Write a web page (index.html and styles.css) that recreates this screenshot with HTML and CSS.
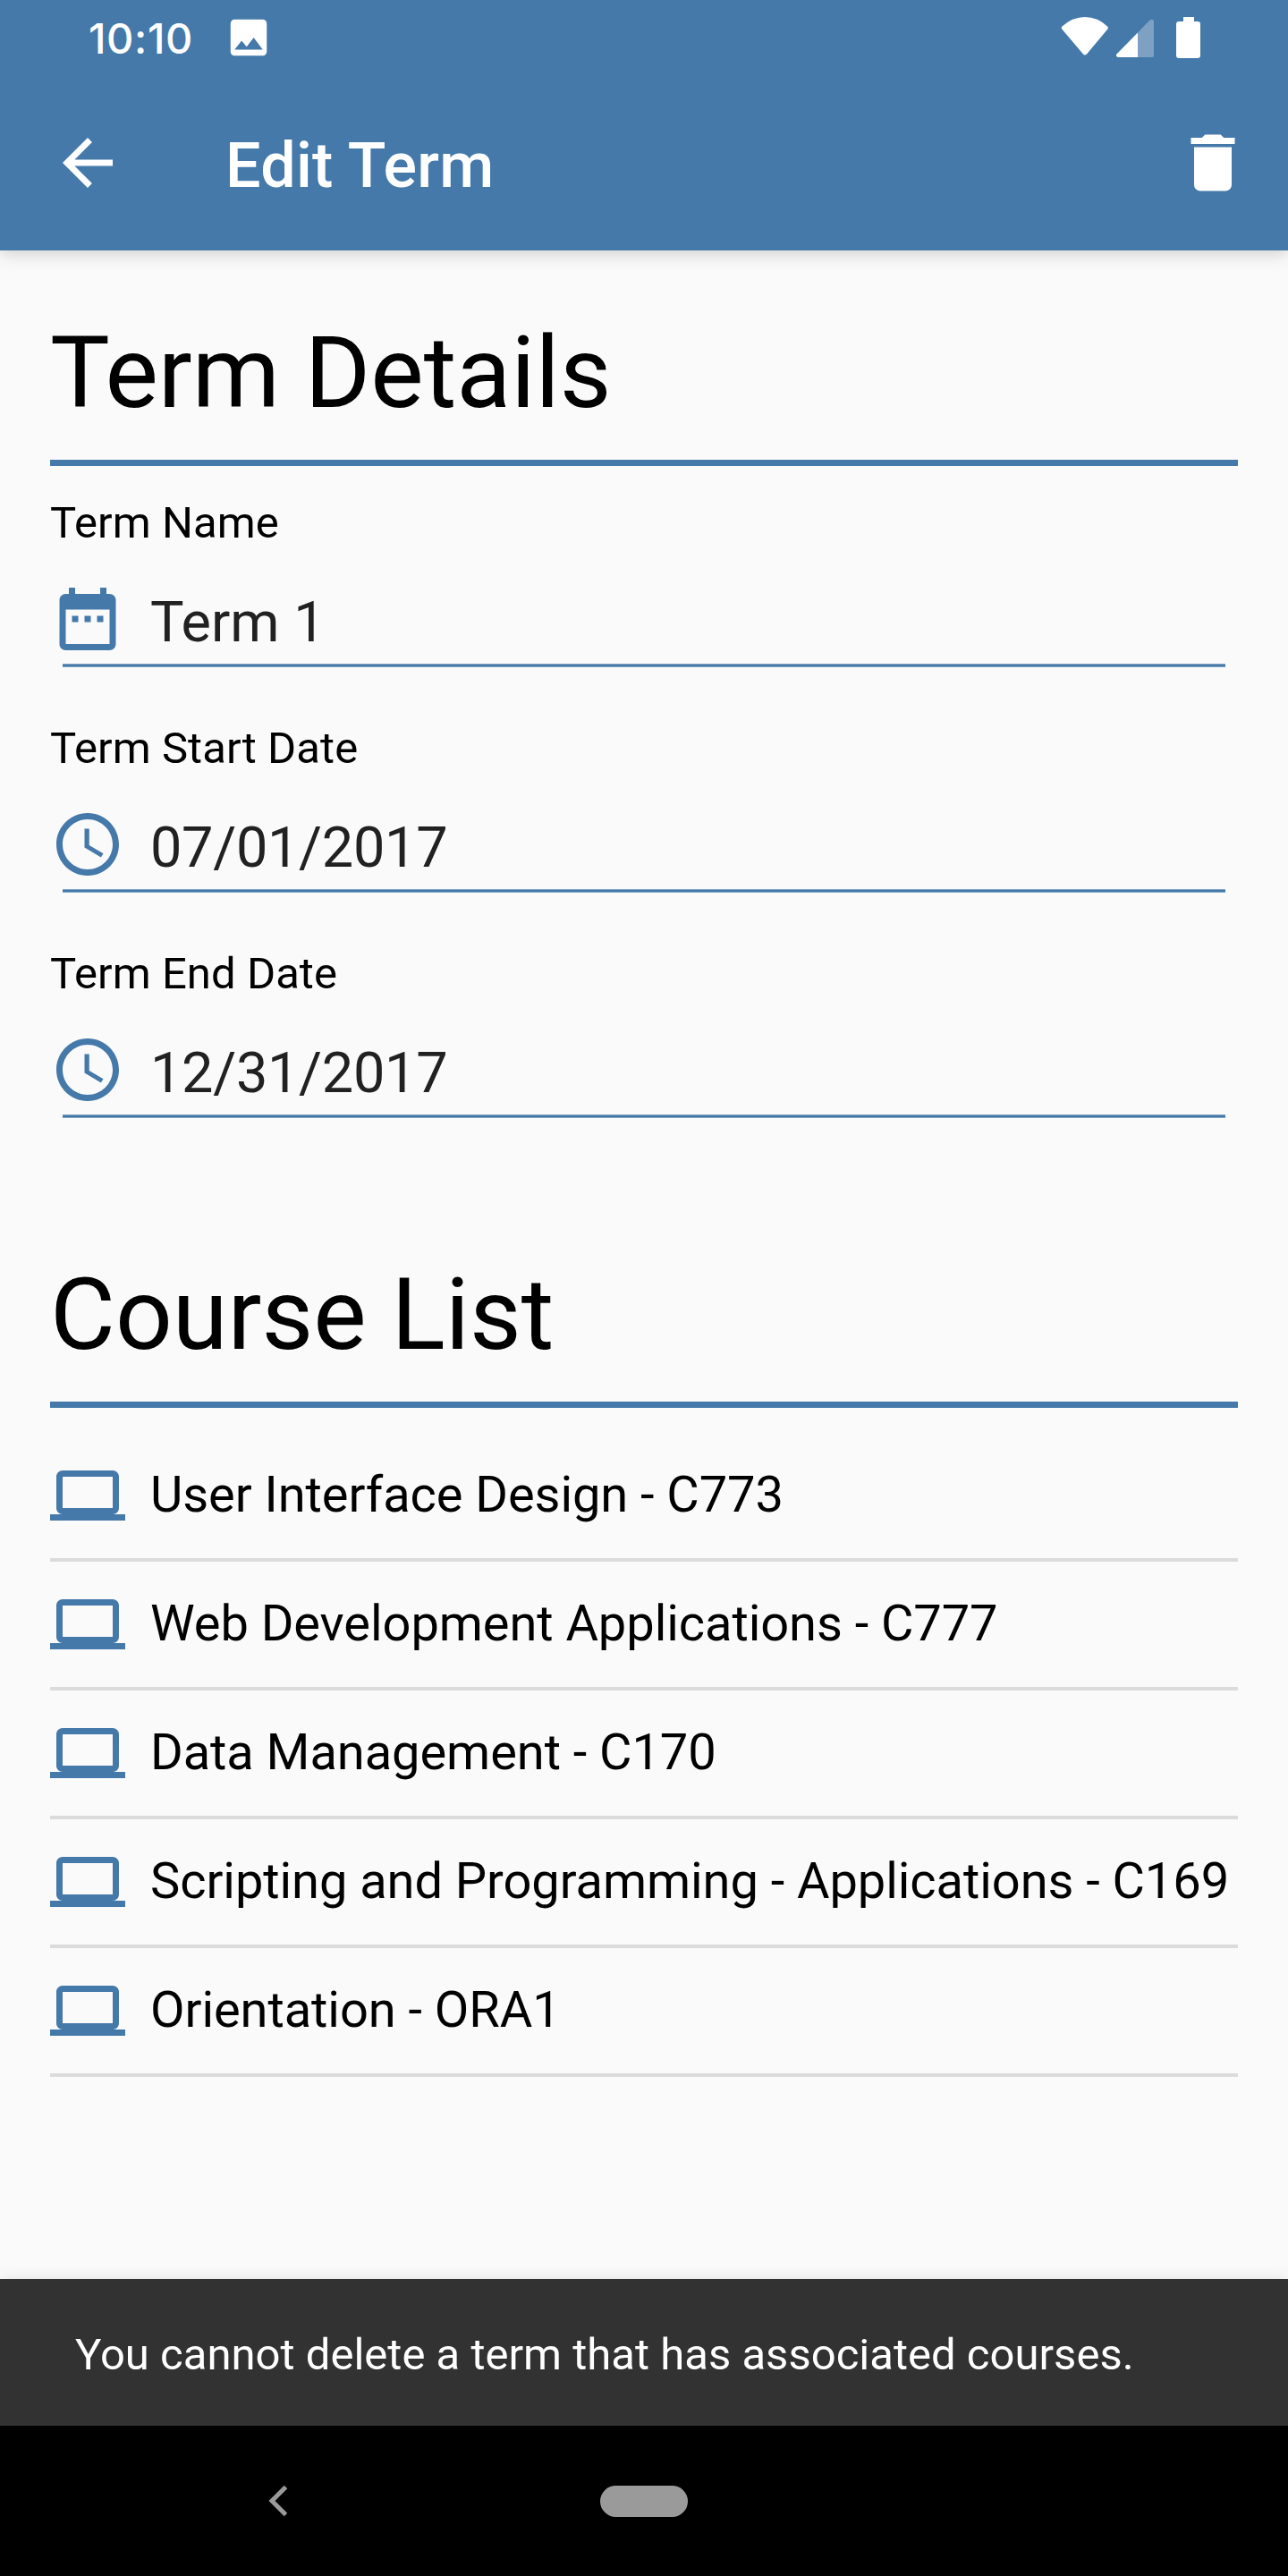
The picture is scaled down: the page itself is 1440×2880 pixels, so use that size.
FILE: index.html
```
<!DOCTYPE html>
<html lang="en">
<head>
<meta charset="utf-8">
<title>Edit Term</title>
<link rel="stylesheet" href="styles.css">
</head>
<body>
<svg class="defs" aria-hidden="true">
  <symbol id="clock" viewBox="0 0 24 24"><path d="M12 2C6.47 2 2 6.48 2 12s4.47 10 10 10c5.52 0 10-4.48 10-10S17.52 2 12 2zM12 20c-4.42 0-8-3.58-8-8s3.58-8 8-8 8 3.58 8 8-3.58 8-8 8zM12.5 7H11v6l5.25 3.15.75-1.23-4.5-2.67z"/></symbol>
  <symbol id="date" viewBox="0 0 24 24"><path d="M9 11H7v2h2v-2zm4 0h-2v2h2v-2zm4 0h-2v2h2v-2zm2-7h-1V2h-2v2H8V2H6v2H5c-1.11 0-1.99.9-1.99 2L3 20c0 1.1.89 2 2 2h14c1.1 0 2-.9 2-2V6c0-1.1-.9-2-2-2zm0 16H5V9h14v11z"/></symbol>
  <symbol id="laptop" viewBox="0 0 24 24"><path d="M20 18c1.1 0 1.99-.9 1.99-2L22 6c0-1.1-.9-2-2-2H4c-1.1 0-2 .9-2 2v10c0 1.1.9 2 2 2H0v2h24v-2h-4zM4 6h16v10H4V6z"/></symbol>
</svg>
<div class="screen">
  <header class="top">
    <div class="status">
      <span class="time">10:10</span>
      <svg class="picture" viewBox="0 0 24 24"><path d="M21 19V5c0-1.100-.9-2-2-2H5c-1.100 0-2 .9-2 2v14c0 1.100.9 2 2 2h14c1.100 0 2-.9 2-2zM8.500 13.500l2.500 3.010L14.500 12l4.500 6H5l3.500-4.500z"/></svg>
      <svg class="signals" viewBox="0 0 160 50">
        <path d="M1.200 11.800Q13 1 27 1Q41 1 52.400 11.800Q53.400 13 52.400 14.600L29 42.600Q27 44.400 25 42.600L1.200 14.600Q.2 13 1.200 11.800Z"/>
        <path class="dim" d="M86 18.500L99.500 4.600Q102 2.600 104 5V44Q104 46 102 46H86Z"/>
        <path d="M86 18.500V46H64Q61.300 45.500 62.200 42.800Z"/>
        <path d="M137 1h12v5h4q3 0 3 3v35q0 3-3 3h-21q-3 0-3-3v-35q0-3 3-3h5z"/>
      </svg>
    </div>
    <div class="toolbar">
      <svg class="icon" viewBox="0 0 24 24"><path d="M20 11H7.830l5.590-5.590L12 4l-8 8 8 8 1.410-1.410L7.830 13H20v-2z"/></svg>
      <h1 class="title">Edit Term</h1>
      <svg class="icon" viewBox="0 0 24 24"><path d="M6 19c0 1.100.9 2 2 2h8c1.100 0 2-.9 2-2V7H6v12zM19 4h-3.500l-1-1h-5l-1 1H5v2h14V4z"/></svg>
    </div>
  </header>
  <main class="content">
    <section class="section">
      <h2 class="heading">Term Details</h2>
      <div class="fields">
        <div class="field">
          <div class="label">Term Name</div>
          <div class="entry"><svg class="icon"><use href="#date"/></svg><span class="value">Term 1</span></div>
          <div class="underline"></div>
        </div>
        <div class="field">
          <div class="label">Term Start Date</div>
          <div class="entry"><svg class="icon"><use href="#clock"/></svg><span class="value date">07/01/2017</span></div>
          <div class="underline"></div>
        </div>
        <div class="field">
          <div class="label">Term End Date</div>
          <div class="entry"><svg class="icon"><use href="#clock"/></svg><span class="value date">12/31/2017</span></div>
          <div class="underline"></div>
        </div>
      </div>
    </section>
    <section class="section">
      <h2 class="heading">Course List</h2>
      <ul class="courses">
        <li class="course"><svg class="icon"><use href="#laptop"/></svg><span>User Interface Design - C773</span></li>
        <li class="course"><svg class="icon"><use href="#laptop"/></svg><span>Web Development Applications - C777</span></li>
        <li class="course"><svg class="icon"><use href="#laptop"/></svg><span>Data Management - C170</span></li>
        <li class="course"><svg class="icon"><use href="#laptop"/></svg><span>Scripting and Programming - Applications - C169</span></li>
        <li class="course"><svg class="icon"><use href="#laptop"/></svg><span>Orientation - ORA1</span></li>
      </ul>
    </section>
  </main>
  <div class="snackbar">You cannot delete a term that has associated courses.</div>
  <nav class="navbar">
    <svg class="back" viewBox="0 0 24 36"><path d="M20.500 2.500L5 18L20.500 33.500"/></svg>
    <span class="home"></span>
    <span></span>
  </nav>
</div>
</body>
</html>
```
FILE: styles.css
```
* { box-sizing: border-box; }
body { margin: 0; background: #fafafa; }
.defs { display: none; }
.screen {
  display: flex;
  flex-direction: column;
  width: 1440px;
  height: 2880px;
  background: #fafafa;
  color: #000;
  font-family: Roboto, "Liberation Sans", sans-serif;
}
.icon { display: block; flex: none; width: 84px; height: 84px; fill: #4479a9; }

.top {
  height: 280px;
  background: #4479a9;
  color: #fff;
  box-shadow: 0 4px 18px rgba(0, 0, 0, .17);
}
.top svg { fill: #fff; }
.status {
  display: flex;
  align-items: flex-start;
  height: 84px;
  padding: 15px 94px 0 99px;
}
.time {
  width: 152px;
  font: 500 47px/56px Inter, sans-serif;
  letter-spacing: .6px;
}
.picture { width: 54px; height: 54px; }
.signals { width: 160px; height: 50px; margin: 3px 0 0 auto; }
.top .dim { fill: #7ea1c3; }
.toolbar {
  display: flex;
  align-items: center;
  height: 196px;
  padding: 0 42px 0 56px;
}
.title {
  flex: 1;
  margin: 0 0 0 112px;
  padding-top: 6px;
  font-size: 70px;
  line-height: 82px;
  font-weight: 500;
  letter-spacing: .3px;
}

.content { flex: 1; padding: 71px 56px 0; }
.heading {
  margin: 0;
  padding-bottom: 32px;
  border-bottom: 7px solid #4479a9;
  font-size: 112px;
  line-height: 131px;
  font-weight: 400;
}
.fields { padding: 35px 0 92px; }
.field { height: 252px; }
.label { font-size: 49px; line-height: 57px; letter-spacing: .07px; }
.entry { display: flex; gap: 28px; height: 84px; margin-top: 37px; }
.value { color: #212121; font-size: 63px; line-height: 91px; }
.date { letter-spacing: -.3px; }
.underline {
  height: 4px;
  margin: 8px 14px 0;
  border: solid #7ea2c4;
  border-width: 1px 0;
  background: #4479a9;
}

.courses { margin: 0; padding: 28px 0 0; list-style: none; }
.course {
  display: flex;
  gap: 28px;
  height: 144px;
  padding-top: 28px;
  border-bottom: 4px solid #dbdbdb;
  font-size: 56px;
  line-height: 82px;
  letter-spacing: -.06px;
  white-space: nowrap;
}

.snackbar {
  height: 164px;
  padding: 56px 84px 0;
  background: #323232;
  box-shadow: 0 0 16px rgba(0, 0, 0, .1);
  color: #fff;
  font-size: 49px;
  line-height: 57px;
  letter-spacing: .02px;
}
.navbar {
  position: relative;
  display: grid;
  grid-template-columns: 1fr 98px 1fr;
  align-items: center;
  height: 168px;
  background: #000;
}
.back { width: 24px; height: 36px; margin-left: 299px; fill: none; stroke: #9a9a9a; stroke-width: 5; }
.home { height: 35px; border-radius: 18px; background: #9a9a9a; }
```
